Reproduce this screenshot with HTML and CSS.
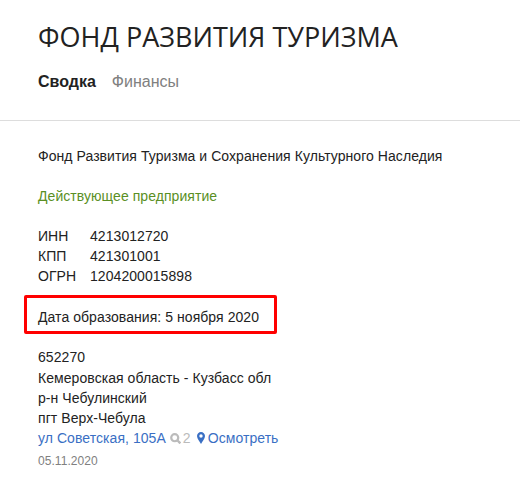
FILE: index.html
```html
<!DOCTYPE html>
<html lang="ru">
<head>
<meta charset="utf-8">
<title>Фонд развития туризма</title>
<link rel="stylesheet" href="styles.css">
</head>
<body>
<header class="head">
  <h1 class="title">ФОНД РАЗВИТИЯ ТУРИЗМА</h1>
  <nav class="tabs">
    <span class="tab tab-active">Сводка</span>
    <span class="tab">Финансы</span>
  </nav>
</header>
<main class="content">
  <p class="fullname">Фонд Развития Туризма и Сохранения Культурного Наследия</p>
  <p class="status">Действующее предприятие</p>
  <dl class="codes">
    <dt>ИНН</dt><dd>4213012720</dd>
    <dt>КПП</dt><dd>421301001</dd>
    <dt>ОГРН</dt><dd>1204200015898</dd>
  </dl>
  <div class="founded">Дата образования: 5 ноября 2020</div>
  <address class="addr">
    <div class="zip">652270</div>
    <div>Кемеровская область - Кузбасс обл</div>
    <div>р-н Чебулинский</div>
    <div>пгт Верх-Чебула</div>
    <div class="addr-line">
      <a class="link">ул Советская, 105А</a>
      <span class="count"><svg class="ico-search" viewBox="0 0 10 10" width="11" height="11"><circle cx="4.3" cy="4.3" r="3.2" fill="none" stroke="currentColor" stroke-width="2"/><path d="M6.600 6.600 9.400 9.400" stroke="currentColor" stroke-width="2.200"/></svg>2</span>
      <a class="link view"><svg class="ico-pin" viewBox="0 0 8 12" width="8" height="12"><path fill-rule="evenodd" fill="currentColor" d="M4 0C1.8 0 0 1.8 0 4c0 2.6 2.6 5.500 4 8 1.400-2.500 4-5.400 4-8 0-2.200-1.800-4-4-4Zm0 2.300a1.700 1.700 0 1 1 0 3.400 1.700 1.700 0 0 1 0-3.400Z"/></svg>Осмотреть</a>
    </div>
    <div class="date">05.11.2020</div>
  </address>
</main>
</body>
</html>
```
FILE: styles.css
```css
html, body { margin: 0; padding: 0; background: #fff; }
body { font-family: "Liberation Sans", Arial, sans-serif; font-size: 14px; line-height: 20px; letter-spacing: 0.06px; color: #222; overflow: hidden; height: 496px; }
.head { padding: 18px 38px 28px; border-bottom: 1px solid #ddd; }
.title { margin: 0; font-family: "Open Sans", sans-serif; font-weight: 400; font-size: 27px; line-height: 38px; letter-spacing: 0; color: #222; }
.tabs { display: flex; gap: 16px; margin-top: 16px; font-size: 16px; line-height: 20px; letter-spacing: 0; }
.tab { color: #808080; }
.tab-active { color: #222; font-weight: 700; }
.content { padding: 25px 38px 0; }
.fullname { margin: 0; }
.status { margin: 20px 0 0; color: #5a8f24; }
.codes { margin: 20px 0 0; display: grid; grid-template-columns: 52px 1fr; }
.codes dt, .codes dd { margin: 0; }
.founded { width: 236px; border: 3px solid #f00; border-radius: 2px; padding: 9px 0 0 11px; height: 24px; margin: 9px 0 0 -14px; }
.addr { margin-top: 13px; font-style: normal; }
.zip { margin-bottom: 1px; }
.addr-line { display: flex; align-items: center; }
.link { color: #3a6fc4; }
.count { color: #bbb; margin-left: 4px; display: inline-flex; align-items: center; gap: 2px; font-size: 14px; }
.ico-search { display: block; }
.view { margin-left: 6px; display: inline-flex; align-items: center; gap: 3px; }
.ico-pin { display: block; }
.date { color: #808080; font-size: 12px; line-height: 20px; margin-top: 3px; }
```
